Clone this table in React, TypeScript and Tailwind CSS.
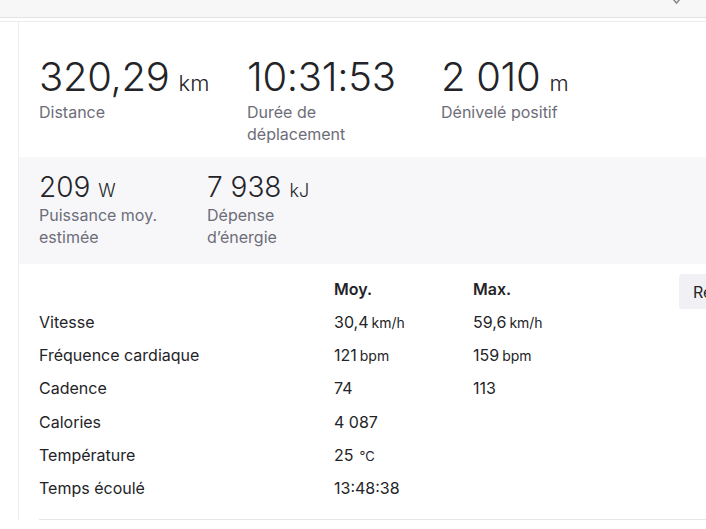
import { ReactNode } from "react"

const font = { fontFamily: "Inter, 'Noto Sans', sans-serif" }

function BigStat({ value, unit, label, width, big = true }: { value: string; unit: string; label: ReactNode; width?: string; big?: boolean }) {
    return (
        <div className={`shrink-0 ${width ?? ""}`}>
            <div className="flex items-baseline text-[#242428]">
                <span className={big ? "text-[40px] leading-[48px] font-light tracking-[-0.3px]" : "text-[28px] leading-[34px] font-light"}>{value}</span>
                <span className={big ? "ml-[9px] text-[22px] font-light" : "ml-[8px] text-[18px] font-light"}>{unit}</span>
            </div>
            <div className="text-[16px] leading-[22px] text-[#6d6d78]">{label}</div>
        </div>
    )
}

const rows = [
    { label: "Vitesse", avg: "30,4", avgUnit: "km/h", max: "59,6", maxUnit: "km/h" },
    { label: "Fréquence cardiaque", avg: "121", avgUnit: "bpm", max: "159", maxUnit: "bpm" },
    { label: "Cadence", avg: "74", avgUnit: "", max: "113", maxUnit: "" },
    { label: "Calories", avg: "4 087", avgUnit: "", max: "", maxUnit: "" },
    { label: "Température", avg: "25", avgUnit: "℃", max: "", maxUnit: "" },
    { label: "Temps écoulé", avg: "13:48:38", avgUnit: "", max: "", maxUnit: "" },
]

function Val({ v, u }: { v: string; u: string }) {
    return (
        <span className="text-[16px] text-[#242428]">
            {v}
            {u && <span className={u === "℃" ? "ml-[6px] text-[13px]" : "ml-[3px] text-[14px]"}>{u}</span>}
        </span>
    )
}

export default function App() {
    return (
        <div className="w-[706px] h-[529px] overflow-hidden bg-white relative" style={font}>
            {/* top bar */}
            <div className="h-[18px] bg-[#f7f7f7] border-b border-[#e2e2e2] relative">
                <svg className="absolute left-[672px] top-[-4px]" width="9" height="10" viewBox="0 0 9 10">
                    <path d="M1 3 L4.5 7 L8 3" fill="none" stroke="#8a8a8a" strokeWidth="1.5" />
                </svg>
            </div>
            <div className="h-[4px] bg-white border-b border-[#ececec]" />

            <div className="flex">
                <div className="w-[18px] shrink-0" />
                <main className="flex-1 border-l border-[#eeeeee] min-w-0 overflow-hidden">
                    {/* main stats */}
                    <section className="flex pl-[20px] pt-[31px] pb-[12px]">
                        <BigStat width="w-[208px]" value="320,29" unit="km" label="Distance" />
                        <BigStat width="w-[194px]" value="10:31:53" unit="" label={<>Durée de<br />déplacement</>} />
                        <BigStat value="2 010" unit="m" label="Dénivelé positif" />
                    </section>

                    {/* secondary stats */}
                    <section className="flex bg-[#f7f7fa] pl-[20px] pt-[13px] pb-[16px]">
                        <BigStat big={false} width="w-[168px]" value="209" unit="W" label={<>Puissance moy.<br />estimée</>} />
                        <BigStat big={false} value="7 938" unit="kJ" label={<>Dépense<br />d’énergie</>} />
                    </section>

                    {/* table */}
                    <section className="pl-[20px] pt-[8px]">
                        <div className="flex h-[33px] items-center">
                            <div className="w-[295px] shrink-0" />
                            <div className="w-[139px] shrink-0 text-[16px] font-semibold text-[#242428]">Moy.</div>
                            <div className="w-[206px] shrink-0 text-[16px] font-semibold text-[#242428]">Max.</div>
                            <button className="shrink-0 self-start mt-[2px] h-[35px] px-[14px] rounded-[4px] bg-[#f0f0f5] text-[16px] text-[#242428] whitespace-nowrap">
                                Réinitialiser
                            </button>
                        </div>
                        {rows.map((r) => (
                            <div key={r.label} className="flex h-[33.3px] items-center text-[16px] text-[#242428]">
                                <div className="w-[295px] shrink-0">{r.label}</div>
                                <div className="w-[139px] shrink-0"><Val v={r.avg} u={r.avgUnit} /></div>
                                <div className="w-[206px] shrink-0">{r.max && <Val v={r.max} u={r.maxUnit} />}</div>
                            </div>
                        ))}
                        <div className="mt-[14px] h-px bg-[#e6e6e6]" />
                    </section>
                </main>
            </div>
        </div>
    )
}
